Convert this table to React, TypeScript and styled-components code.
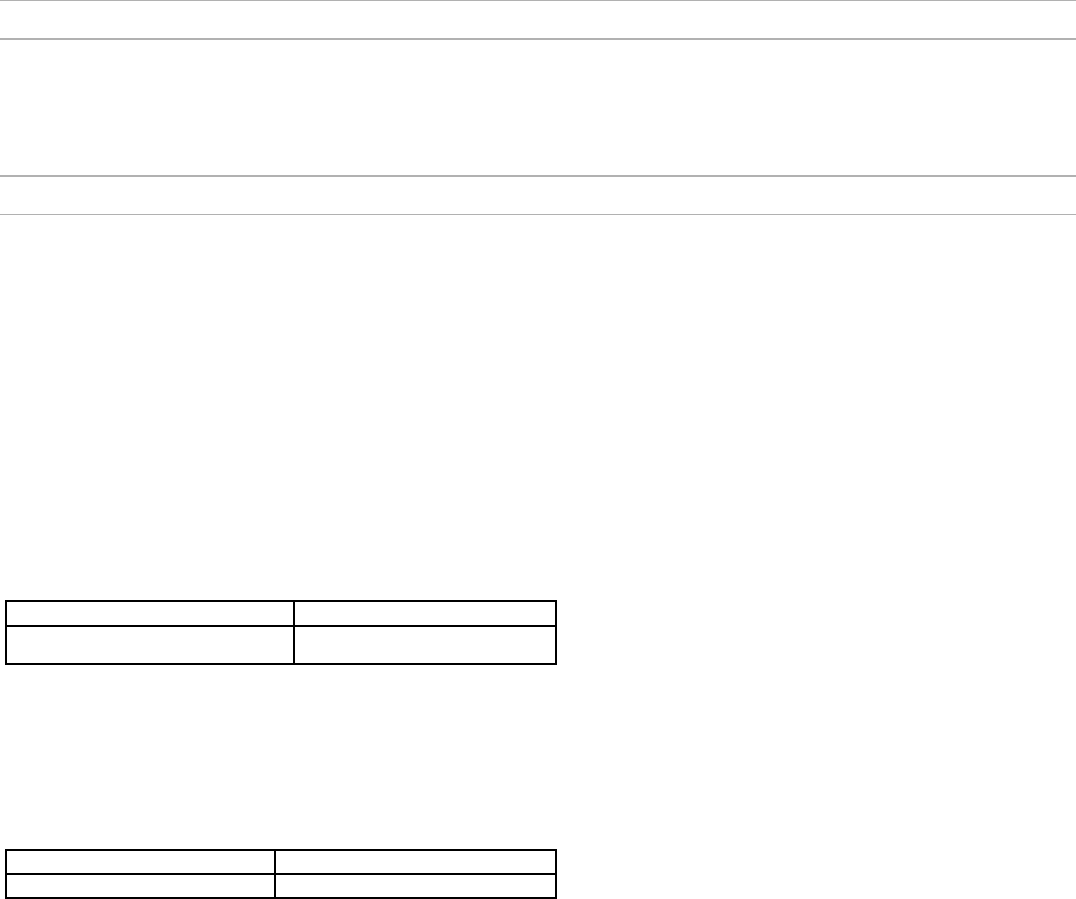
import * as React from "react";
import styled, { createGlobalStyle } from "styled-components";

const GlobalStyle = createGlobalStyle`
  html, body {
    margin: 0;
    padding: 0;
    background: #ffffff;
    font-family: "Liberation Sans", Arial, sans-serif;
  }
`;

const Page = styled.div`
  display: flex;
  flex-direction: column;
  width: 100%;
  min-height: 899px;
`;

const Rule = styled.div<{ $thick?: number }>`
  height: ${(p) => p.$thick ?? 1}px;
  background: #b1b1b1;
  flex-shrink: 0;
`;

const Band = styled.div<{ $height: number }>`
  height: ${(p) => p.$height}px;
  flex-shrink: 0;
`;

const TableWrap = styled.div`
  padding-left: 5px;
`;

const Grid = styled.div<{ $cols: string; $rows: string }>`
  display: grid;
  width: fit-content;
  grid-template-columns: ${(p) => p.$cols};
  grid-template-rows: ${(p) => p.$rows};
  border-top: 2px solid #000;
  border-left: 2px solid #000;
`;

const Cell = styled.div`
  border-right: 2px solid #000;
  border-bottom: 2px solid #000;
  font-size: 14px;
`;

const App: React.FunctionComponent = () => {
  return (
    <>
      <GlobalStyle />
      <Page>
        <Rule />
        <Band $height={37} />
        <Rule $thick={2} />
        <Band $height={135} />
        <Rule $thick={2} />
        <Band $height={37} />
        <Rule />
        <Band $height={385} />
        <TableWrap>
          <Grid $cols="288px 262px" $rows="25px 38px">
            <Cell />
            <Cell />
            <Cell />
            <Cell />
          </Grid>
        </TableWrap>
        <Band $height={184} />
        <TableWrap>
          <Grid $cols="269px 281px" $rows="24px 24px">
            <Cell />
            <Cell />
            <Cell />
            <Cell />
          </Grid>
        </TableWrap>
      </Page>
    </>
  );
};

export default App;
